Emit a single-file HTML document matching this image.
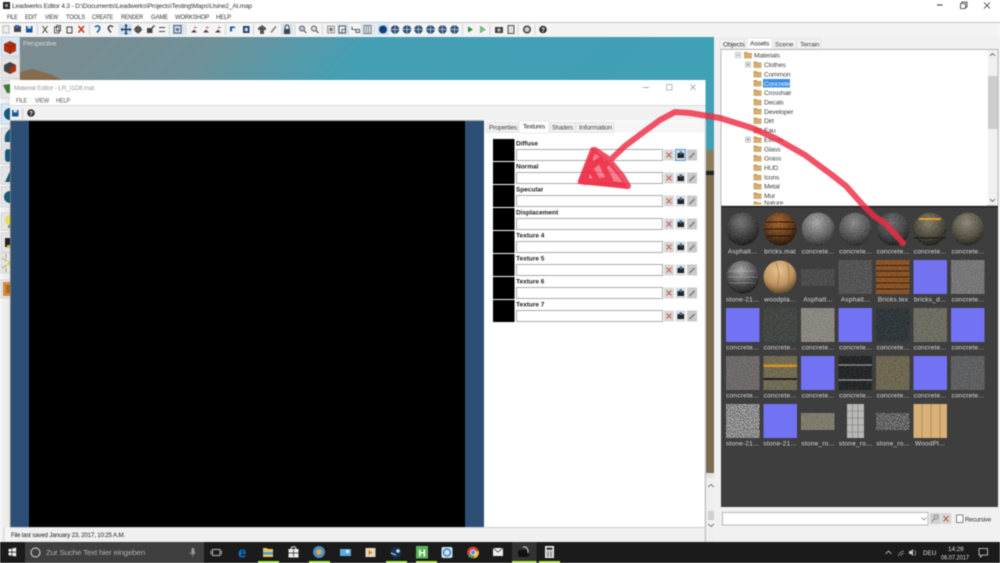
<!DOCTYPE html>
<html><head><meta charset="utf-8"><title>Leadwerks Editor</title>
<style>
html,body{margin:0;padding:0;background:#fff;width:1000px;height:563px;overflow:hidden}
svg{display:block;position:absolute;left:0;top:0;filter:blur(.4px)}
text{font-family:"Liberation Sans",sans-serif;font-size:6.8px;fill:#333;letter-spacing:-.2px}
.b{font-weight:bold;fill:#222;font-size:6.5px;letter-spacing:0}
.l{fill:#ddd;font-size:6.5px;text-anchor:middle;letter-spacing:.22px}
.t{fill:#444;font-size:6.8px}
.w{fill:#ddd;font-size:6.3px;letter-spacing:0}
</style></head><body>
<svg width="1000" height="563" viewBox="0 0 1000 563" xmlns="http://www.w3.org/2000/svg">
<defs>
<filter id="n" x="0" y="0" width="1" height="1" color-interpolation-filters="sRGB"><feTurbulence type="fractalNoise" baseFrequency=".8" numOctaves="2" seed="3" result="t"/><feColorMatrix in="t" type="matrix" values="1 0 0 0 0 1 0 0 0 0 1 0 0 0 0 0 0 0 0 1" result="g"/><feComposite in="SourceGraphic" in2="g" operator="arithmetic" k1="0" k2="1" k3=".3" k4="-.15" result="c"/><feComposite in="c" in2="SourceGraphic" operator="in"/></filter>
<filter id="n2" x="0" y="0" width="1" height="1" color-interpolation-filters="sRGB"><feTurbulence type="fractalNoise" baseFrequency="1.1" numOctaves="1" seed="7" result="t"/><feColorMatrix in="t" type="matrix" values="1 0 0 0 0 1 0 0 0 0 1 0 0 0 0 0 0 0 0 1" result="g"/><feComposite in="SourceGraphic" in2="g" operator="arithmetic" k1="0" k2="1" k3="1.6" k4="-.8" result="c"/><feComposite in="c" in2="SourceGraphic" operator="in"/></filter>
<linearGradient id="sky" x1="0" y1="0" x2="1" y2="0.15"><stop offset="0" stop-color="#7d8b8f"/><stop offset=".28" stop-color="#6f9199"/><stop offset=".5" stop-color="#459fb4"/><stop offset="1" stop-color="#40a0b6"/></linearGradient>
<radialGradient id="s1" cx=".45" cy=".3" r=".75"><stop offset="0" stop-color="#777"/><stop offset=".6" stop-color="#3e3e3e"/><stop offset="1" stop-color="#1a1a1a"/></radialGradient>
<radialGradient id="s2" cx=".45" cy=".3" r=".75"><stop offset="0" stop-color="#a5672f"/><stop offset=".6" stop-color="#5f3a1c"/><stop offset="1" stop-color="#1e130a"/></radialGradient>
<radialGradient id="s3" cx=".45" cy=".3" r=".75"><stop offset="0" stop-color="#a8a8a8"/><stop offset=".6" stop-color="#686868"/><stop offset="1" stop-color="#2e2e2e"/></radialGradient>
<radialGradient id="s4" cx=".45" cy=".3" r=".75"><stop offset="0" stop-color="#8c8c8c"/><stop offset=".6" stop-color="#555"/><stop offset="1" stop-color="#262626"/></radialGradient>
<radialGradient id="s5" cx=".45" cy=".3" r=".75"><stop offset="0" stop-color="#6e6e6e"/><stop offset=".6" stop-color="#454545"/><stop offset="1" stop-color="#1c1c1c"/></radialGradient>
<radialGradient id="s6" cx=".45" cy=".3" r=".75"><stop offset="0" stop-color="#88806c"/><stop offset=".6" stop-color="#4f4a3e"/><stop offset="1" stop-color="#1c1a15"/></radialGradient>
<radialGradient id="s7" cx=".45" cy=".3" r=".75"><stop offset="0" stop-color="#8d8879"/><stop offset=".6" stop-color="#575346"/><stop offset="1" stop-color="#211f19"/></radialGradient>
<radialGradient id="s8" cx=".45" cy=".3" r=".75"><stop offset="0" stop-color="#a9a9a9"/><stop offset=".6" stop-color="#4e4e4e"/><stop offset="1" stop-color="#161616"/></radialGradient>
<radialGradient id="s9" cx=".45" cy=".3" r=".75"><stop offset="0" stop-color="#ecc48f"/><stop offset=".6" stop-color="#bd935f"/><stop offset="1" stop-color="#4f3a20"/></radialGradient>
<linearGradient id="side" x1="0" y1="0" x2="1" y2="0"><stop offset="0" stop-color="#f4f4f4"/><stop offset="1" stop-color="#dcdcdc"/></linearGradient>
<g id="f"><path d="M0 1.500h3l1 1h4v5.500H0z" fill="#c69a5c"/><path d="M0 3.300h8V8H0z" fill="#d6ad70"/></g>
<g id="x"><rect width="10" height="11" fill="#d8d8d8"/><path d="M2.500 3l5 5M7.500 3l-5 5" stroke="#c0605a" stroke-width="1.100"/></g>
<g id="i"><rect width="10" height="11" fill="#dcdcdc"/><rect x="2" y="3.500" width="6.500" height="5" fill="#222"/><rect x="4" y="1.800" width="2.500" height="3" fill="#2f70b0"/></g>
<g id="p"><rect width="10" height="11" fill="#c9c9c9"/><path d="M2.500 8.500l5-5" stroke="#777" stroke-width="1.400"/></g>
<g id="h"><circle r="4.300" fill="#2a4f7a"/><path d="M0-4.300v8.600M-4.300 0h8.600" stroke="#cfd6dc" stroke-width=".7"/></g>
</defs>

<!-- base -->
<rect width="1000" height="563" fill="#f0f0f0"/>
<rect width="1000" height="22" fill="#fff"/>
<rect x="0" y="22" width="1000" height="1" fill="#c4c4c4"/>
<rect y="23" width="1000" height="14" fill="#f3f3f3"/>

<!-- title -->
<rect x="3" y="2" width="7" height="7" fill="#222"/><rect x="5" y="4" width="3" height="3" fill="#999"/>
<text x="12" y="8" textLength="240" lengthAdjust="spacingAndGlyphs">Leadwerks Editor 4.3 - D:\Documents\Leadwerks\Projects\Testing\Maps\Usine2_AI.map</text>
<path d="M937 5h5.500" stroke="#333"/><path d="M960.500 3.500h5v5h-5z M962 3.500v-1.500h5v5h-1.500" fill="none" stroke="#333" stroke-width=".8"/><path d="M984 2.500l6 6M990 2.500l-6 6" stroke="#333" stroke-width=".8"/>

<!-- menu -->
<text x="7" y="19.200" textLength="10.500" lengthAdjust="spacingAndGlyphs">FILE</text><text x="25" y="19.200" textLength="12" lengthAdjust="spacingAndGlyphs">EDIT</text><text x="45" y="19.200" textLength="13" lengthAdjust="spacingAndGlyphs">VIEW</text><text x="66" y="19.200" textLength="19" lengthAdjust="spacingAndGlyphs">TOOLS</text><text x="92" y="19.200" textLength="21" lengthAdjust="spacingAndGlyphs">CREATE</text><text x="121" y="19.200" textLength="22" lengthAdjust="spacingAndGlyphs">RENDER</text><text x="151" y="19.200" textLength="17" lengthAdjust="spacingAndGlyphs">GAME</text><text x="175" y="19.200" textLength="34" lengthAdjust="spacingAndGlyphs">WORKSHOP</text><text x="216" y="19.200" textLength="15" lengthAdjust="spacingAndGlyphs">HELP</text>

<!-- toolbar -->
<g>
<rect x="120" y="24" width="12" height="11" fill="#cde2f5"/><rect x="172" y="24" width="12" height="11" fill="#cde2f5"/><rect x="281" y="24" width="12" height="11" fill="#cde2f5"/><rect x="337" y="24" width="12" height="11" fill="#cde2f5"/><rect x="361" y="24" width="12" height="11" fill="#cde2f5"/><rect x="377" y="24" width="12" height="11" fill="#cde2f5"/>
<path d="M37.500 24v11M89.500 24v11M119 24v11M169.500 24v11M185.500 24v11M225.500 24v11M253.500 24v11M295 24v11M322.500 24v11M374.500 24v11M462.500 24v11M490 24v11M518 24v11M535 24v11" stroke="#c8c8c8" stroke-width=".7"/>
<rect x="3" y="26" width="6" height="7" fill="#eee" stroke="#999" stroke-width=".6"/>
<rect x="14" y="26" width="7" height="6" fill="#444"/><rect x="15" y="25" width="4" height="3" fill="#2c6fb5"/>
<rect x="26" y="26" width="6.500" height="6.500" fill="#14589c"/><rect x="27.500" y="26" width="3.500" height="2.500" fill="#cde"/>
<path d="M42.500 26l5 7M47.500 26l-5 7" stroke="#444" stroke-width="1"/>
<rect x="54.500" y="27" width="4.500" height="6" fill="#fff" stroke="#333" stroke-width=".8"/><rect x="56.500" y="25.500" width="4" height="5.500" fill="none" stroke="#333" stroke-width=".8"/>
<rect x="67" y="27" width="5" height="6" fill="#eee" stroke="#333" stroke-width=".9"/>
<path d="M78.500 26l5.500 6.500M84 26l-5.500 6.500" stroke="#c8321e" stroke-width="1.500"/>
<path d="M95 27c3-2.500 6 0 4 3l-2 2.500" fill="none" stroke="#14589c" stroke-width="1.500"/>
<path d="M113 27c-3-2.500-6 0-4 3l2 2.500" fill="none" stroke="#444" stroke-width="1.500"/>
<path d="M126 25v9M121.500 29.500h9" stroke="#1c3f66" stroke-width="1.500"/><path d="M126 24l-2 2h4zM126 35l-2-2h4zM120.500 29.500l2-2v4zM131.500 29.500l-2-2v4z" fill="#1c3f66"/>
<circle cx="138" cy="29.500" r="3.500" fill="#444"/><path d="M138 25v9M133.500 29.500h9" stroke="#666"/>
<rect x="147" y="28" width="5.500" height="5" fill="#444"/><path d="M152 28l2.500-2.500" stroke="#444" stroke-width="1.400"/>
<path d="M159 27.500h6M159 31.500h6" stroke="#444" stroke-width="1"/>
<rect x="174" y="25.500" width="7" height="7.500" fill="none" stroke="#445" stroke-width=".9"/><circle cx="177.500" cy="29.500" r="1.800" fill="#778"/>
<path d="M191 32.500l3-3 3 3zM203 32.500l3-3 3 3zM215 32.500l3-3 3 3z" fill="#444"/><path d="M194 27.500h2.500M206 27.500h2.500M218 27.500h2.500" stroke="#c33" stroke-width=".9"/>
<rect x="230" y="26.500" width="5" height="5" fill="#14589c"/><rect x="232" y="28" width="4" height="4" fill="#eee"/>
<rect x="243" y="26" width="6.500" height="7" fill="#14407a"/><rect x="244.800" y="27.800" width="3" height="3.400" fill="#ddd"/>
<path d="M258 28l4-3 4 3v2h-8zM260 30h4v4h-4z" fill="#555"/>
<path d="M271 32.500l5-6" stroke="#777" stroke-width="1.400"/>
<rect x="284" y="29" width="6" height="5" fill="#444"/><path d="M285 29v-2a2 2 0 0 1 4 0v2" fill="none" stroke="#444"/>
<circle cx="302" cy="28.500" r="2.500" fill="#bcd" stroke="#555"/><path d="M304 30.500l2.500 2.500" stroke="#555" stroke-width="1.200"/>
<circle cx="314" cy="28.500" r="2.500" fill="#ddd" stroke="#555"/><path d="M316 30.500l2.500 2.500" stroke="#555" stroke-width="1.200"/>
<rect x="327.500" y="26" width="7" height="7" fill="#ddd" stroke="#777" stroke-width=".7"/><circle cx="331" cy="29.500" r="1.800" fill="#777"/>
<rect x="339" y="26" width="6.500" height="7" fill="#eee" stroke="#333" stroke-width=".8"/><path d="M342 29.500h3.500M342 29.500v3.500" stroke="#333" stroke-width=".7"/>
<path d="M352 26.500v3h4v3h3.500v-3h-3.500" fill="none" stroke="#333" stroke-width=".8"/>
<rect x="364" y="25.500" width="7" height="8" fill="#ddd" stroke="#666" stroke-width=".7"/><path d="M366.300 25.500v8M368.600 25.500v8" stroke="#666" stroke-width=".6"/>
<circle cx="383" cy="29.500" r="4" fill="#14407a"/>
<use href="#h" x="395" y="29.500"/><use href="#h" x="407" y="29.500"/><use href="#h" x="418.500" y="29.500"/><use href="#h" x="430.500" y="29.500"/><use href="#h" x="442.500" y="29.500"/><use href="#h" x="454.500" y="29.500"/>
<path d="M468 26.500l5 3-5 3z" fill="#2d8a35"/><path d="M480.500 26.500l4.500 3-4.500 3z" fill="#9cc88e" stroke="#2d8a35" stroke-width=".6"/>
<rect x="495" y="27" width="8" height="6" fill="#444"/><circle cx="499" cy="30" r="1.500" fill="#ccc"/>
<rect x="508" y="25.500" width="6" height="8" fill="#ddd" stroke="#444" stroke-width=".9"/>
<circle cx="527" cy="29.500" r="3.300" fill="#ccc" stroke="#444" stroke-width="1.500"/>
<circle cx="543" cy="29.500" r="3.800" fill="#333"/><text x="541.200" y="32" style="font-size:6px;font-weight:bold;fill:#fff">?</text>
</g>

<!-- left panel -->
<rect x="0" y="37" width="20" height="505" fill="url(#side)"/>
<!-- viewport -->
<rect x="20" y="37" width="694" height="113" fill="url(#sky)"/>
<path d="M20 72l12-3 18 5 12 6H20z" fill="#856c4c"/>
<text x="23" y="45.500" style="fill:#d8d8d8;font-size:6.800px">Perspective</text>
<!-- side buttons -->
<rect x="1" y="37" width="18.500" height="19" fill="#dbe7f2" stroke="#a9c8e4" stroke-width=".7"/>
<path d="M10 41l6 3v7l-6 3-6-3v-7z" fill="#b0300f"/><path d="M4 44l6 3 6-3M10 47v7" stroke="#6d1c08" stroke-width=".6" fill="none"/>
<rect x="1" y="58" width="18.500" height="20" fill="#e4e4e4" stroke="#ccc" stroke-width=".7"/>
<path d="M10 62l6 3v6l-6 3-6-3v-6z" fill="#444"/><path d="M10 68l6-3v6l-6 3z" fill="#b0300f"/>
<rect x="1" y="80" width="18.500" height="18" fill="#e4e4e4" stroke="#ccc" stroke-width=".7"/><path d="M3 85l8-1-1 9h-3z" fill="#3b7a33"/>
<rect x="1" y="104" width="18.500" height="20" fill="#dbe7f2" stroke="#a9c8e4" stroke-width=".7"/><circle cx="10" cy="114" r="6" fill="#165a78"/>
<rect x="1" y="128" width="18.500" height="17" fill="#e4e4e4" stroke="#ccc" stroke-width=".7"/><path d="M10 129c-4 3-6 6-5 13h6z" fill="#165a78"/>
<rect x="1" y="147" width="18.500" height="17" fill="#e4e4e4" stroke="#ccc" stroke-width=".7"/><rect x="5" y="149" width="6" height="13" rx="3" fill="#165a78"/>
<rect x="1" y="167" width="18.500" height="17" fill="#e4e4e4" stroke="#ccc" stroke-width=".7"/><path d="M11 169l-6 13h6z" fill="#165a78"/>
<rect x="1" y="187" width="18.500" height="20" fill="#e4e4e4" stroke="#ccc" stroke-width=".7"/><circle cx="10" cy="197" r="6" fill="#165a78"/>
<rect x="1" y="213" width="18.500" height="17" fill="#e4e4e4" stroke="#ccc" stroke-width=".7"/><circle cx="10" cy="220" r="5" fill="#e8dc50"/><rect x="8" y="225" width="3" height="3" fill="#888"/>
<rect x="1" y="233" width="18.500" height="19" fill="#e4e4e4" stroke="#ccc" stroke-width=".7"/><path d="M5 238h6v9H5z" fill="#222"/><path d="M7 245h4v3H7z" fill="#d8c840"/>
<rect x="1" y="253" width="18.500" height="20" fill="#e4e4e4" stroke="#ccc" stroke-width=".7"/><circle cx="10" cy="263" r="2.500" fill="#d8d070"/><path d="M2 258l5 3M2 268l5-3M6 254v4M6 272v-4" stroke="#a8a050"/>
<rect x="1" y="280" width="18.500" height="18" fill="#e4e4e4" stroke="#ccc" stroke-width=".7"/><rect x="3" y="282" width="10" height="14" rx="1" fill="#d08a3c"/><rect x="6" y="285" width="4" height="8" fill="#a96a24"/>
<rect x="4" y="527" width="6" height="15" fill="#f4f4f4"/><rect x="3.500" y="527" width=".7" height="15" fill="#c8c8c8"/>
<!-- terrain strip -->
<rect x="695" y="150" width="19" height="323" fill="#7a6a50"/>
<path d="M695 150h19v20h-19z" fill="#8d7c5c"/>
<rect x="695" y="171" width="19" height="4" fill="#1e2220"/>
<rect x="695" y="473" width="21" height="69" fill="#efefef"/>
<rect x="695" y="473" width="21" height="5" fill="#e2e2e2"/>
<path d="M708 487l3-2.500 3 2.500" fill="none" stroke="#555" stroke-width=".8"/>
<rect x="708" y="511" width="8" height="9" fill="#cfcfcf"/>
<path d="M708 524l3 2.500 3-2.500" fill="none" stroke="#555" stroke-width=".8"/>

<!-- material editor window -->
<rect x="10" y="80" width="695.500" height="462" fill="#fff"/>
<rect x="10" y="105.500" width="695.500" height="15" fill="#f1f1f1"/>
<rect x="10" y="105" width="695.500" height="1" fill="#d8d8d8"/>
<rect x="10" y="120" width="474" height="1" fill="#aaa"/>
<text x="14" y="90" textLength="80" lengthAdjust="spacingAndGlyphs" style="fill:#999">Material Editor - LR_I1Dif.mat</text>
<path d="M643 87.500h6" stroke="#aaa"/><rect x="666.500" y="84.500" width="5.500" height="5.500" fill="none" stroke="#aaa" stroke-width=".8"/><path d="M690.500 84.500l5 5.500M695.500 84.500l-5 5.500" stroke="#999" stroke-width=".8"/>
<text x="16" y="102.500" style="fill:#555" textLength="11" lengthAdjust="spacingAndGlyphs">FILE</text><text x="35" y="102.500" style="fill:#555" textLength="14" lengthAdjust="spacingAndGlyphs">VIEW</text><text x="56" y="102.500" style="fill:#555" textLength="14" lengthAdjust="spacingAndGlyphs">HELP</text>
<rect x="12" y="110" width="6.500" height="6.500" fill="#14589c"/><rect x="13.500" y="110" width="3.500" height="2.500" fill="#cde"/>
<path d="M22.500 108v11" stroke="#bbb" stroke-width=".7"/>
<circle cx="31" cy="113" r="3.800" fill="#333"/><text x="29.200" y="115.500" style="font-size:6px;font-weight:bold;fill:#fff">?</text>
<rect x="10" y="121" width="1" height="406" fill="#777"/>
<rect x="11" y="121" width="18" height="406" fill="#2d4e75"/>
<rect x="29" y="121" width="436" height="406" fill="#000"/>
<rect x="465" y="121" width="19" height="406" fill="#2d4e75"/>
<rect x="484" y="121" width="221" height="406" fill="#fff"/>
<rect x="484" y="121" width="221" height="11.500" fill="#f6f6f6"/>
<rect x="10" y="527" width="696" height="15" fill="#f0f0f0"/>
<rect x="10" y="527" width="696" height="1" fill="#d0d0d0"/>
<text x="11" y="537" style="fill:#222" textLength="114" lengthAdjust="spacingAndGlyphs">File last saved January 23, 2017, 10:25 A.M.</text>
<rect x="704.500" y="121" width="1.500" height="420" fill="#d8d8d8"/>
<rect x="705" y="473" width="1" height="69" fill="#bbb"/>

<!-- tabs -->
<rect x="487" y="122.500" width="31" height="10" fill="#f0f0f0" stroke="#ddd" stroke-width=".6"/>
<rect x="550" y="122.500" width="25" height="10" fill="#f0f0f0" stroke="#ddd" stroke-width=".6"/>
<rect x="576" y="122.500" width="38" height="10" fill="#f0f0f0" stroke="#ddd" stroke-width=".6"/>
<rect x="519" y="121" width="30" height="12" fill="#fff" stroke="#ddd" stroke-width=".6"/>
<text class="t" x="489" y="129.500" textLength="28" lengthAdjust="spacingAndGlyphs">Properties</text><text x="523" y="128.500" style="fill:#222" textLength="22" lengthAdjust="spacingAndGlyphs">Textures</text><text class="t" x="552" y="129.500" textLength="21" lengthAdjust="spacingAndGlyphs">Shaders</text><text class="t" x="579" y="129.500" textLength="33" lengthAdjust="spacingAndGlyphs">Information</text>

<!-- texture rows -->
<g id="rows">
<rect x="493" y="139" width="21.500" height="22" fill="#000"/><text class="b" x="516" y="145.500">Diffuse</text><rect x="516.500" y="149.500" width="146" height="11" fill="#fff" stroke="#aaa"/><use href="#x" x="664" y="149.500"/><use href="#i" x="675.500" y="149.500"/><rect x="675.500" y="149.500" width="10" height="11" fill="none" stroke="#2a7fd0" stroke-width=".8"/><use href="#p" x="687" y="149.500"/>
<rect x="493" y="162" width="21.500" height="22" fill="#000"/><text class="b" x="516" y="168.500">Normal</text><rect x="516.500" y="172.500" width="146" height="11" fill="#fff" stroke="#aaa"/><use href="#x" x="664" y="172.500"/><use href="#i" x="675.500" y="172.500"/><use href="#p" x="687" y="172.500"/>
<rect x="493" y="185" width="21.500" height="22" fill="#000"/><text class="b" x="516" y="191.500">Specular</text><rect x="516.500" y="195.500" width="146" height="11" fill="#fff" stroke="#aaa"/><use href="#x" x="664" y="195.500"/><use href="#i" x="675.500" y="195.500"/><use href="#p" x="687" y="195.500"/>
<rect x="493" y="208" width="21.500" height="22" fill="#000"/><text class="b" x="516" y="214.500">Displacement</text><rect x="516.500" y="218.500" width="146" height="11" fill="#fff" stroke="#aaa"/><use href="#x" x="664" y="218.500"/><use href="#i" x="675.500" y="218.500"/><use href="#p" x="687" y="218.500"/>
<rect x="493" y="231" width="21.500" height="22" fill="#000"/><text class="b" x="516" y="237.500">Texture 4</text><rect x="516.500" y="241.500" width="146" height="11" fill="#fff" stroke="#aaa"/><use href="#x" x="664" y="241.500"/><use href="#i" x="675.500" y="241.500"/><use href="#p" x="687" y="241.500"/>
<rect x="493" y="254" width="21.500" height="22" fill="#000"/><text class="b" x="516" y="260.500">Texture 5</text><rect x="516.500" y="264.500" width="146" height="11" fill="#fff" stroke="#aaa"/><use href="#x" x="664" y="264.500"/><use href="#i" x="675.500" y="264.500"/><use href="#p" x="687" y="264.500"/>
<rect x="493" y="277" width="21.500" height="22" fill="#000"/><text class="b" x="516" y="283.500">Texture 6</text><rect x="516.500" y="287.500" width="146" height="11" fill="#fff" stroke="#aaa"/><use href="#x" x="664" y="287.500"/><use href="#i" x="675.500" y="287.500"/><use href="#p" x="687" y="287.500"/>
<rect x="493" y="300" width="21.500" height="22" fill="#000"/><text class="b" x="516" y="306.500">Texture 7</text><rect x="516.500" y="310.500" width="146" height="11" fill="#fff" stroke="#aaa"/><use href="#x" x="664" y="310.500"/><use href="#i" x="675.500" y="310.500"/><use href="#p" x="687" y="310.500"/>
</g>

<!-- right panel -->
<rect x="714" y="37" width="286" height="505" fill="#f0f0f0"/>
<rect x="720" y="39.500" width="24" height="9" fill="#f3f3f3" stroke="#ddd" stroke-width=".6"/>
<rect x="774" y="39.500" width="22" height="9" fill="#f3f3f3" stroke="#ddd" stroke-width=".6"/>
<rect x="797" y="39.500" width="24" height="9" fill="#f3f3f3" stroke="#ddd" stroke-width=".6"/>
<rect x="747" y="38" width="25" height="11" fill="#fff" stroke="#ddd" stroke-width=".6"/>
<text x="723" y="46.500" style="fill:#333">Objects</text><text x="750" y="45.500" style="fill:#222">Assets</text><text x="775" y="46.500" style="fill:#444">Scene</text><text x="800" y="46.500" style="fill:#444">Terrain</text>
<rect x="721" y="49.500" width="277" height="156" fill="#fff" stroke="#aaa" stroke-width=".8"/>
<rect x="988" y="50" width="9.500" height="155" fill="#f0f0f0"/>
<rect x="988" y="76" width="9.500" height="53" fill="#cdcdcd"/>
<path d="M990 56l2.500-2.500 2.500 2.500M990 199l2.500 2.500 2.500-2.500" fill="none" stroke="#555" stroke-width=".8"/>
<rect x="735.500" y="52.500" width="5" height="5" fill="#eee" stroke="#aaa" stroke-width=".6"/><path d="M736.500 55h3" stroke="#667" stroke-width=".6"/>
<use href="#f" x="744" y="50.500"/><text class="t" x="754" y="57.500">Materials</text>
<rect x="745.500" y="62" width="5" height="5" fill="#eee" stroke="#aaa" stroke-width=".6"/><path d="M746.500 64.500h3M748 63v3" stroke="#667" stroke-width=".6"/>
<rect x="745.500" y="137" width="5" height="5" fill="#eee" stroke="#aaa" stroke-width=".6"/><path d="M746.500 139.500h3M748 138v3" stroke="#667" stroke-width=".6"/>
<use href="#f" x="753.500" y="60"/><text class="t" x="764" y="67">Clothes</text>
<use href="#f" x="753.500" y="69.500"/><text class="t" x="764" y="76.500">Common</text>
<use href="#f" x="753.500" y="78.500"/><rect x="763" y="79" width="27" height="8.500" fill="#3a8ee6"/><text x="764" y="85.800" style="fill:#eaf4ff">Concrete</text>
<use href="#f" x="753.500" y="88"/><text class="t" x="764" y="95">Crosshair</text>
<use href="#f" x="753.500" y="97.500"/><text class="t" x="764" y="104.500">Decals</text>
<use href="#f" x="753.500" y="106.500"/><text class="t" x="764" y="113.800">Developer</text>
<use href="#f" x="753.500" y="116"/><text class="t" x="764" y="123">Dirt</text>
<use href="#f" x="753.500" y="125.500"/><text class="t" x="764" y="132.500">Eau</text>
<use href="#f" x="753.500" y="135"/><text class="t" x="764" y="142">Effects</text>
<use href="#f" x="753.500" y="144"/><text class="t" x="764" y="151.500">Glass</text>
<use href="#f" x="753.500" y="153.500"/><text class="t" x="764" y="160.500">Grass</text>
<use href="#f" x="753.500" y="163"/><text class="t" x="764" y="170">HUD</text>
<use href="#f" x="753.500" y="172.500"/><text class="t" x="764" y="179.500">Icons</text>
<use href="#f" x="753.500" y="181.500"/><text class="t" x="764" y="188.500">Metal</text>
<use href="#f" x="753.500" y="191"/><text class="t" x="764" y="198">Mur</text>
<use href="#f" x="753.500" y="200"/><text class="t" x="764" y="204.800">Nature</text>
<rect x="722" y="204.500" width="265" height="1" fill="#fff"/>

<!-- assets -->
<rect x="721" y="206" width="277" height="301" fill="#3e3e3e"/>
<rect x="721" y="206" width="277" height="1.500" fill="#222"/>
<g filter="url(#n)">
<circle cx="742.500" cy="229" r="16.500" fill="url(#s1)"/><circle cx="780" cy="229" r="16.500" fill="url(#s2)"/><path d="M766 222h28M764 229h32M766 236h28" stroke="#2a1608" stroke-width="1"/><circle cx="818" cy="229" r="16.500" fill="url(#s3)"/><circle cx="855.500" cy="229" r="16.500" fill="url(#s4)"/><circle cx="893" cy="229" r="16.500" fill="url(#s5)"/><circle cx="930" cy="229" r="16.500" fill="url(#s6)"/><path d="M919 219h22" stroke="#e09a2a" stroke-width="2"/><path d="M914 238h32" stroke="#222" stroke-width="1.500"/><circle cx="968" cy="229" r="16.500" fill="url(#s7)"/>
</g>
<text class="l" x="742.500" y="253.500">Asphalt...</text><text class="l" x="780" y="253.500">bricks.mat</text><text class="l" x="818" y="253.500">concrete...</text><text class="l" x="855.500" y="253.500">concrete...</text><text class="l" x="893" y="253.500">concrete...</text><text class="l" x="930" y="253.500">concrete...</text><text class="l" x="968" y="253.500">concrete...</text>

<g filter="url(#n)">
<circle cx="742.500" cy="277" r="16.500" fill="url(#s8)"/><path d="M729 271h27M727 277h31M729 283h27" stroke="#ccc" stroke-width=".6" opacity=".6"/>
<rect x="801" y="269" width="33.500" height="17" fill="#4d4d4d"/><rect x="838.500" y="260" width="33.500" height="34" fill="#555"/>
<rect x="876" y="260" width="33.500" height="34" fill="#8a5428"/><path d="M876 265.500h33.500M876 271h33.500M876 277h33.500M876 283h33.500M876 289h33.500" stroke="#3a2412" stroke-width="1"/>
<rect x="951" y="260" width="33.500" height="34" fill="#777"/>
</g>
<circle cx="780" cy="277" r="16.500" fill="url(#s9)"/><path d="M775 261c5 10 5 22 0 32M787 262c3 10 3 20 0 30" stroke="#8a6a3c" stroke-width=".6" fill="none"/>
<rect x="913.500" y="260" width="33.500" height="34" fill="#7373f2"/>
<text class="l" x="742.500" y="301.500">stone-21...</text><text class="l" x="780" y="301.500">woodpla...</text><text class="l" x="818" y="301.500">Asphalt...</text><text class="l" x="855.500" y="301.500">Asphalt...</text><text class="l" x="893" y="301.500">Bricks.tex</text><text class="l" x="930" y="301.500">bricks_d...</text><text class="l" x="968" y="301.500">concrete...</text>

<rect x="726" y="308" width="33.500" height="34" fill="#7272f4"/><rect x="838.500" y="308" width="33.500" height="34" fill="#7272f4"/><rect x="951" y="308" width="33.500" height="34" fill="#7272f4"/>
<g filter="url(#n)"><rect x="763.500" y="308" width="33.500" height="34" fill="#434844"/><rect x="801" y="308" width="33.500" height="34" fill="#8a8680"/><rect x="876" y="308" width="33.500" height="34" fill="#30383c"/><rect x="913.500" y="308" width="33.500" height="34" fill="#6f6d62"/></g>
<text class="l" x="742.500" y="349.500">concrete...</text><text class="l" x="780" y="349.500">concrete...</text><text class="l" x="818" y="349.500">concrete...</text><text class="l" x="855.500" y="349.500">concrete...</text><text class="l" x="893" y="349.500">concrete...</text><text class="l" x="930" y="349.500">concrete...</text><text class="l" x="968" y="349.500">concrete...</text>

<g filter="url(#n)"><rect x="726" y="356" width="33.500" height="34" fill="#6f6a6a"/><rect x="763.500" y="356" width="33.500" height="34" fill="#726b54"/><rect x="763.500" y="364.500" width="33.500" height="2.500" fill="#d8901f"/><rect x="763.500" y="378" width="33.500" height="2" fill="#222"/><rect x="838.500" y="356" width="33.500" height="34" fill="#26282a"/><path d="M838.500 365h33.500M838.500 380h33.500" stroke="#999" stroke-width="1.300"/><rect x="876" y="356" width="33.500" height="34" fill="#6e6752"/><rect x="951" y="356" width="33.500" height="34" fill="#5f6062"/></g>
<rect x="801" y="356" width="33.500" height="34" fill="#7272f4"/><rect x="913.500" y="356" width="33.500" height="34" fill="#7272f4"/>
<text class="l" x="742.500" y="397.500">concrete...</text><text class="l" x="780" y="397.500">concrete...</text><text class="l" x="818" y="397.500">concrete...</text><text class="l" x="855.500" y="397.500">concrete...</text><text class="l" x="893" y="397.500">concrete...</text><text class="l" x="930" y="397.500">concrete...</text><text class="l" x="968" y="397.500">concrete...</text>

<rect x="726" y="404" width="33.500" height="34" fill="#8b8b8b" filter="url(#n2)"/><rect x="763.500" y="404" width="33.500" height="34" fill="#7272f4"/>
<rect x="801" y="413" width="33.500" height="17" fill="#7f7b6c" filter="url(#n)"/><rect x="847" y="404" width="17" height="34" fill="#b8b8b4"/><path d="M847 411h17M847 418h17M847 425h17M847 432h17M852.500 404v34M858 404v34" stroke="#777" stroke-width=".6"/><rect x="876" y="413" width="33.500" height="17" fill="#666" filter="url(#n2)"/><rect x="913.500" y="404" width="33.500" height="34" fill="#d8b078"/><path d="M922 404v34M931 404v34M940 404v34" stroke="#a98650" stroke-width=".8"/>
<text class="l" x="742.500" y="445.500">stone-21...</text><text class="l" x="780" y="445.500">stone-21...</text><text class="l" x="818" y="445.500">stone_ro...</text><text class="l" x="855.500" y="445.500">stone_ro...</text><text class="l" x="893" y="445.500">stone_ro...</text><text class="l" x="930" y="445.500">WoodPl...</text>

<!-- search row -->
<rect x="722.500" y="512.500" width="205.500" height="12.500" fill="#fff" stroke="#aaa" stroke-width=".8"/>
<path d="M921.500 517.500l2.500 2.500 2.500-2.500" fill="none" stroke="#777" stroke-width=".7"/>
<rect x="930" y="513" width="10.500" height="11" fill="#d0d0d0"/><circle cx="936" cy="517" r="2" fill="none" stroke="#888"/><path d="M934.500 518.500l-2.500 3" stroke="#888"/>
<rect x="941" y="513" width="10.500" height="11" fill="#d8d8d8"/><path d="M943.500 516l5 5.500M948.500 516l-5 5.500" stroke="#c05a50" stroke-width="1.100"/>
<rect x="956.500" y="515" width="6.500" height="7.500" fill="#fff" stroke="#555" stroke-width=".7"/>
<text x="965" y="521.500" style="fill:#333" textLength="26" lengthAdjust="spacingAndGlyphs">Recursive</text>

<!-- red annotation -->
<g fill="none" stroke="#ee2c44" stroke-linecap="round" stroke-linejoin="round" opacity=".82">
<path d="M903 243L886 224 874 216 862 204 846 186 832 175 805 155 775 138 752 128 720 118 690 113 675 112 660 120 645 131 625 146 605 165" stroke-width="6"/>
<path d="M593 150L581 181 611 184 628 186 622 176 607 158 595 150M590 160L585 182 610 180 600 160 590 168 596 178" stroke-width="6"/>
</g>
<path d="M593 148L577 184 629 189 612 165z" fill="#ee2c44" opacity=".6"/>

<!-- taskbar -->
<rect y="542" width="1000" height="21" fill="#1b1b1b"/>
<rect x="512" y="542" width="24.500" height="21" fill="#333"/>
<rect x="25" y="542" width="179" height="21" fill="#3f3f3f"/>
<path d="M8.500 549l3-.4v3.200h-3zM12.200 548.400l4-.6v4h-4zM8.500 552.500h3v3.200l-3-.4zM12.200 552.500h4v4l-4-.6z" fill="#eee"/>
<circle cx="35.500" cy="552.500" r="4.500" fill="none" stroke="#ddd" stroke-width="1"/>
<text x="46" y="555" textLength="99" lengthAdjust="spacingAndGlyphs" style="fill:#b0b0b0;font-size:7px">Zur Suche Text hier eingeben</text>
<rect x="191.500" y="548" width="3" height="6" rx="1.500" fill="#999"/><path d="M190 552c0 3 5 3 5 0M192.800 555v2" stroke="#999" fill="none" stroke-width=".7"/>
<rect x="212.500" y="549.500" width="7.500" height="6" fill="none" stroke="#ddd" stroke-width=".8"/><path d="M211 550.500v4M221.500 550.500v4" stroke="#ddd" stroke-width=".7"/>
<text x="238" y="557.500" style="fill:#0a78d6;font-size:15px;font-weight:bold">e</text>
<path d="M263 548h4l1 1h5v8h-10z" fill="#e9c662"/><rect x="263" y="552" width="10" height="2.500" fill="#4a9fd6"/>
<rect x="288.500" y="549" width="10" height="8.500" fill="#eee"/><path d="M291 549c0-3 5-3 5 0" fill="none" stroke="#eee"/><path d="M293.500 550v6.500M288.500 553h10" stroke="#222" stroke-width=".7"/>
<circle cx="319" cy="552" r="6" fill="#4a90c8"/><circle cx="319" cy="552" r="2.800" fill="#e8a83c"/>
<rect x="340" y="549" width="11" height="7" fill="#58aee0"/><rect x="346" y="550" width="3" height="3" fill="#ddeaf2"/>
<rect x="365.500" y="548" width="10" height="9" fill="#e8d8c0"/><path d="M368.500 550l4 2.500-4 2.500z" fill="#e07a20"/>
<circle cx="396" cy="552.500" r="5.500" fill="#13345c"/><circle cx="398" cy="551" r="1.800" fill="#cdd"/><path d="M391 553l5 2" stroke="#cdd"/>
<rect x="416" y="546" width="12" height="12.500" fill="#5bb55a"/><text x="418.500" y="556.500" style="fill:#fff;font-size:10px;font-weight:bold">H</text>
<rect x="441.500" y="547" width="11" height="11" rx="2" fill="#cfe3f5"/><circle cx="447" cy="552.500" r="3.500" fill="none" stroke="#2a78c0" stroke-width="1.300"/>
<circle cx="473" cy="552.500" r="5.800" fill="#d8453a"/><path d="M473 552.500l-5 2.800a5.800 5.800 0 0 0 5 3z" fill="#3da24c"/><path d="M473 552.500l5.500-1.800a5.800 5.800 0 0 1-4 7.600z" fill="#f4c430"/><circle cx="473" cy="552.500" r="2.500" fill="#4a8af4" stroke="#fff" stroke-width=".8"/>
<rect x="493" y="548" width="10" height="8" fill="#eee"/><path d="M493 548l5 4 5-4" stroke="#333" stroke-width=".7" fill="none"/>
<rect x="518" y="550" width="11" height="7" rx="2" fill="#111"/><path d="M523 547h3l2 3v3" stroke="#ddd" fill="none"/>
<rect x="545" y="546" width="9" height="12" fill="#eee"/><rect x="546.500" y="547.500" width="6" height="2.500" fill="#444"/><path d="M546 552h7M546 554h7M546 556h7M548 551v6M551 551v6" stroke="#555" stroke-width=".6"/>
<rect x="258" y="561" width="21" height="2" fill="#b5e853"/><rect x="309" y="561" width="21" height="2" fill="#b5e853"/><rect x="386" y="561" width="21" height="2" fill="#b5e853"/><rect x="416" y="561" width="21" height="2" fill="#b5e853"/><rect x="512" y="561" width="24.500" height="2" fill="#b5e853"/><rect x="539" y="561" width="21" height="2" fill="#b5e853"/>
<path d="M885.500 554l3-3 3 3" fill="none" stroke="#ccc" stroke-width=".8"/>
<path d="M898 556c1-3 4-5 6-5M900.500 556c.6-1.500 2-2.500 3.500-2.500" fill="none" stroke="#999" stroke-width=".8"/>
<path d="M909 551v3h2l2 2v-7l-2 2z" fill="#ccc"/><path d="M914.500 550.500c1.500 1.500 1.500 3.500 0 5" fill="none" stroke="#ccc" stroke-width=".7"/>
<text class="w" x="923" y="555">DEU</text>
<text class="w" x="948" y="551" style="fill:#ddd">14:26</text>
<text class="w" x="941" y="559.500" textLength="28" lengthAdjust="spacingAndGlyphs">06.07.2017</text>
<path d="M979 548.500h8.500v6.500h-5l-2 2v-2h-1.500z" fill="none" stroke="#ddd" stroke-width=".8"/>
</svg>
</body></html>
